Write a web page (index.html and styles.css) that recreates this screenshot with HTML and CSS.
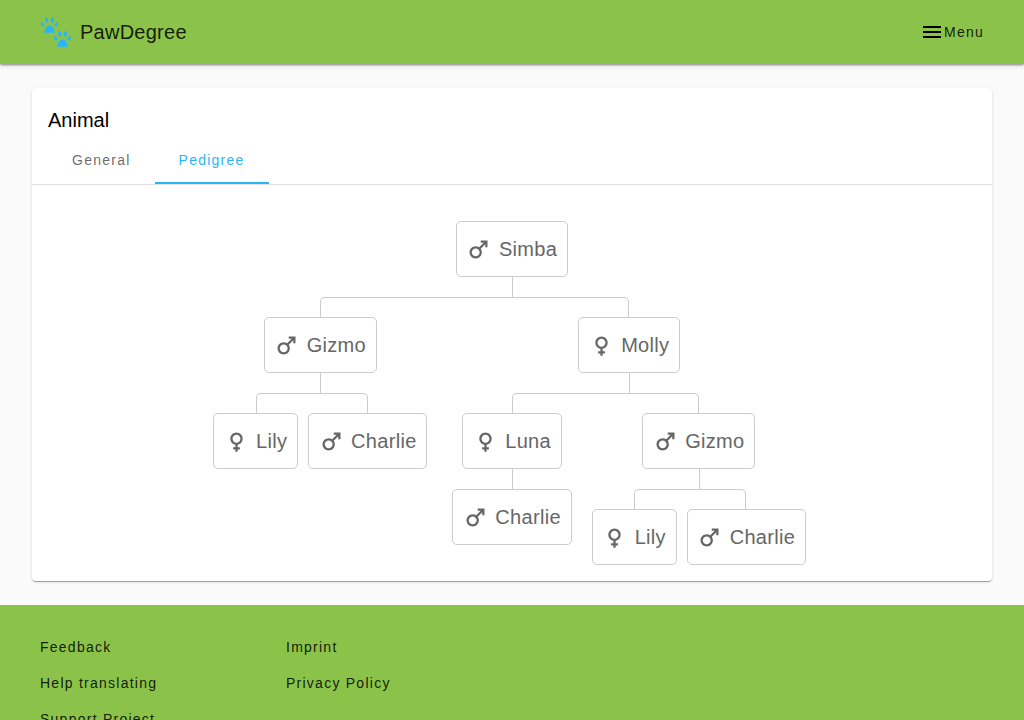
FILE: index.html
```html
<html>
  <head>
    <title>PawDegree</title>
    <link rel="stylesheet" href="styles.css">
  </head>
  <body>
    <svg class="icon-defs">
      <symbol id="male" viewBox="0 0 24 24">
        <path d="M9.5 11c1.93 0 3.5 1.57 3.5 3.5S11.43 18 9.5 18 6 16.43 6 14.5 7.57 11 9.5 11zm0-2C6.46 9 4 11.46 4 14.5S6.46 20 9.5 20s5.5-2.46 5.5-5.5c0-1.16-.36-2.23-.97-3.12L18 7.42V10h2V4h-6v2h2.58l-3.97 3.97C11.73 9.36 10.66 9 9.5 9z"/>
      </symbol>
      <symbol id="female" viewBox="0 0 24 24">
        <path d="M17.5 9.5C17.5 6.46 15.04 4 12 4S6.5 6.46 6.5 9.5c0 2.7 1.94 4.93 4.5 5.4V17H9v2h2v2h2v-2h2v-2h-2v-2.1c2.56-.47 4.5-2.7 4.5-5.4zm-9 0C8.5 7.57 10.07 6 12 6s3.5 1.57 3.5 3.5S13.93 13 12 13s-3.5-1.57-3.5-3.5z"/>
      </symbol>
      <symbol id="paw" viewBox="0 0 17 16">
        <path d="M3.5 16C3.2 12.2 5.5 8.6 8.5 8.6s5.3 3.6 5 7.4c-3.3-.5-6.7-.5-10 0z"/>
        <ellipse cx="1.6" cy="7.4" rx="1.5" ry="2.3" transform="rotate(-18 1.6 7.4)"/>
        <ellipse cx="5.7" cy="2.9" rx="1.6" ry="2.8" transform="rotate(-6 5.7 2.9)"/>
        <ellipse cx="11.3" cy="2.9" rx="1.6" ry="2.8" transform="rotate(6 11.3 2.9)"/>
        <ellipse cx="15.4" cy="7.4" rx="1.5" ry="2.3" transform="rotate(18 15.4 7.4)"/>
      </symbol>
    </svg>

    <header class="toolbar">
      <a class="brand">
        <span class="logo">
          <svg class="paw paw-top"><use href="#paw"/></svg>
          <svg class="paw paw-bottom"><use href="#paw"/></svg>
        </span>
        <span class="brand-name">PawDegree</span>
      </a>
      <button class="menu-btn">
        <svg class="menu-icon" viewBox="0 0 24 24"><path d="M3 18h18v-2H3v2zm0-5h18v-2H3v2zm0-7v2h18V6H3z"/></svg>
        <span>Menu</span>
      </button>
    </header>

    <main class="content">
      <section class="card">
        <h2 class="card-title">Animal</h2>
        <nav class="tabs">
          <a class="tab">General</a>
          <a class="tab tab-active">Pedigree</a>
        </nav>
        <div class="tree">
          <ul>
            <li>
              <div class="node"><svg class="gender"><use href="#male"/></svg>Simba</div>
              <ul>
                <li>
                  <div class="node"><svg class="gender"><use href="#male"/></svg>Gizmo</div>
                  <ul>
                    <li>
                      <div class="node"><svg class="gender"><use href="#female"/></svg>Lily</div>
                    </li>
                    <li>
                      <div class="node"><svg class="gender"><use href="#male"/></svg>Charlie</div>
                    </li>
                  </ul>
                </li>
                <li>
                  <div class="node"><svg class="gender"><use href="#female"/></svg>Molly</div>
                  <ul>
                    <li>
                      <div class="node"><svg class="gender"><use href="#female"/></svg>Luna</div>
                      <ul>
                        <li>
                          <div class="node"><svg class="gender"><use href="#male"/></svg>Charlie</div>
                        </li>
                      </ul>
                    </li>
                    <li>
                      <div class="node"><svg class="gender"><use href="#male"/></svg>Gizmo</div>
                      <ul>
                        <li>
                          <div class="node"><svg class="gender"><use href="#female"/></svg>Lily</div>
                        </li>
                        <li>
                          <div class="node"><svg class="gender"><use href="#male"/></svg>Charlie</div>
                        </li>
                      </ul>
                    </li>
                  </ul>
                </li>
              </ul>
            </li>
          </ul>
        </div>
      </section>
    </main>

    <footer class="footer">
      <div class="footer-col">
        <a class="footer-link">Feedback</a>
        <a class="footer-link">Help translating</a>
        <a class="footer-link">Support Project</a>
      </div>
      <div class="footer-col">
        <a class="footer-link">Imprint</a>
        <a class="footer-link">Privacy Policy</a>
      </div>
    </footer>
  </body>
</html>
```

FILE: styles.css
```css
:root {
  --primary: #8bc34a;
  --accent: #29b6f6;
  --text: rgba(0, 0, 0, 0.87);
  --line: #ccc;
}

* {
  box-sizing: border-box;
  margin: 0;
  padding: 0;
}

html {
  overflow: hidden;
}

body {
  background: #fafafa;
  color: var(--text);
  font-family: "Liberation Sans", sans-serif;
}

.icon-defs {
  display: none;
}

.toolbar {
  display: flex;
  align-items: center;
  justify-content: space-between;
  height: 64px;
  padding: 0 40px;
  background: var(--primary);
  box-shadow: 0 1px 2px rgba(0, 0, 0, 0.4), 0 2px 4px rgba(0, 0, 0, 0.1);
  position: relative;
}

.brand {
  display: flex;
  align-items: center;
  gap: 8px;
}

.logo {
  position: relative;
  width: 32px;
  height: 32px;
}

.paw {
  position: absolute;
  width: 17px;
  height: 16px;
  fill: var(--accent);
}

.paw-top {
  left: 1px;
  top: 1px;
}

.paw-bottom {
  left: 14px;
  top: 15px;
}

.brand-name {
  font-size: 20px;
  letter-spacing: 0.25px;
}

.menu-btn {
  display: flex;
  align-items: center;
  border: none;
  background: none;
  color: var(--text);
  font-family: inherit;
  font-size: 14px;
  letter-spacing: 1.25px;
}

.menu-icon {
  width: 24px;
  height: 24px;
}

.content {
  padding: 24px 32px;
}

.card {
  background: white;
  border-radius: 4px;
  padding-bottom: 16px;
  box-shadow: 0 2px 1px -1px rgba(0, 0, 0, 0.2), 0 1px 1px 0 rgba(0, 0, 0, 0.14), 0 1px 3px 0 rgba(0, 0, 0, 0.12);
}

.card-title {
  padding: 16px 16px 0;
  color: black;
  font-size: 20px;
  font-weight: 400;
  line-height: 32px;
}

.tabs {
  display: flex;
  padding: 0 16px;
  height: 49px;
  border-bottom: 1px solid #e0e0e0;
}

.tab {
  display: flex;
  align-items: center;
  padding: 2px 24px;
  height: 48px;
  font-size: 14px;
  letter-spacing: 1.25px;
  color: rgba(0, 0, 0, 0.6);
}

.tab-active {
  color: var(--accent);
  border-bottom: 2px solid var(--accent);
  padding-bottom: 0;
}

.tree {
  display: flex;
  justify-content: center;
  padding-top: 36px;
}

.tree ul {
  display: flex;
  justify-content: center;
  position: relative;
  padding-top: 20px;
  list-style: none;
}

.tree > ul {
  padding-top: 0;
}

.tree ul ul::before {
  content: "";
  position: absolute;
  top: 0;
  left: 50%;
  height: 20px;
  border-left: 1px solid var(--line);
}

.tree li {
  display: flex;
  flex-direction: column;
  align-items: center;
  flex: none;
  position: relative;
  padding: 20px 5px 0;
}

.tree li::before,
.tree li::after {
  content: "";
  position: absolute;
  top: 0;
  right: 50%;
  width: 50%;
  height: 20px;
  border-top: 1px solid var(--line);
}

.tree li::after {
  right: auto;
  left: 50%;
  border-left: 1px solid var(--line);
}

.tree li:only-child {
  padding-top: 0;
}

.tree li:only-child::before,
.tree li:only-child::after,
.tree li:first-child::before,
.tree li:last-child::after {
  display: none;
}

.tree li:first-child::after {
  border-radius: 5px 0 0 0;
}

.tree li:last-child::before {
  border-right: 1px solid var(--line);
  border-radius: 0 5px 0 0;
}

.node {
  display: flex;
  align-items: center;
  gap: 6.5px;
  height: 56px;
  padding: 0 9.8px 0 8.5px;
  background: white;
  border: 1px solid var(--line);
  border-radius: 5px;
  color: #666;
  font-size: 20px;
  letter-spacing: 0.3px;
  white-space: nowrap;
}

.gender {
  width: 27px;
  height: 27px;
  fill: #666;
}

.footer {
  display: flex;
  padding: 24px 32px;
  background: var(--primary);
}

.footer-col {
  display: flex;
  flex-direction: column;
  align-items: flex-start;
  width: 246px;
}

.footer-link {
  display: flex;
  align-items: center;
  height: 36px;
  padding: 0 8px;
  font-size: 14px;
  letter-spacing: 1.25px;
  white-space: nowrap;
}
```
